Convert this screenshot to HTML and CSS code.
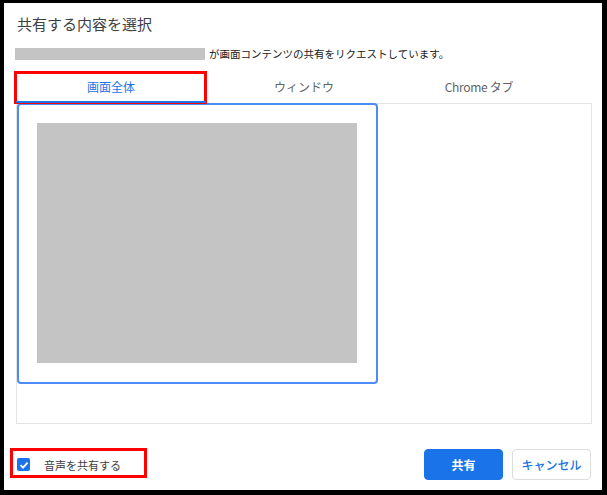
FILE: index.html
```html
<!DOCTYPE html>
<html lang="ja">
  <head>
    <meta charset="UTF-8" />
    <title>共有する内容を選択</title>
    <link rel="stylesheet" href="styles.css">
  </head>
  <body>
    <div class="dialog">
      <div class="dialog-title">共有する内容を選択</div>
      <div class="request-line">
        <span class="origin-mask"></span>
        <span class="request-text">が画面コンテンツの共有をリクエストしています。</span>
      </div>
      <div class="tabs">
        <div class="tab active">画面全体<span class="mark"></span></div>
        <div class="tab">ウィンドウ</div>
        <div class="tab">Chrome タブ</div>
      </div>
      <div class="source-panel">
        <div class="source-item selected">
          <div class="thumb"></div>
        </div>
      </div>
      <div class="dialog-footer">
        <label class="audio-option">
          <span class="checkbox">
            <svg width="12" height="12" viewBox="0 0 12 12">
              <path d="M2.5 6.2 L5 8.6 L9.6 3.6" fill="none" stroke="#fff" stroke-width="1.8" />
            </svg>
          </span>
          <span class="audio-label">音声を共有する</span>
          <span class="mark"></span>
        </label>
        <div class="buttons">
          <button class="btn primary">共有</button>
          <button class="btn">キャンセル</button>
        </div>
      </div>
    </div>
  </body>
</html>
```

FILE: styles.css
```css
* {
  box-sizing: border-box;
}
body {
  margin: 0;
  background: #000000;
  font-family: "Noto Sans CJK JP", "Noto Sans", sans-serif;
  color: #202124;
}
.dialog {
  margin: 3px 5px 0 4px;
  width: 598px;
  height: 487px;
  background: #ffffff;
  padding: 0 11px 0 12px;
}
.dialog-title {
  padding-top: 11px;
  padding-left: 1px;
  font-size: 15px;
  line-height: 20px;
  color: #3c4043;
}
.request-line {
  margin-top: 14px;
  display: flex;
  align-items: center;
  height: 12px;
}
.origin-mask {
  width: 190px;
  height: 12px;
  margin-left: -1px;
  background: #c4c4c4;
}
.request-text {
  margin-left: 4px;
  font-size: 10.5px;
  line-height: 12px;
  color: #202124;
}
.tabs {
  margin-top: 11px;
  display: grid;
  grid-template-columns: 190px 196px 154px;
  height: 32px;
}
.tab {
  position: relative;
  font-size: 12px;
  line-height: 32px;
  text-align: center;
  color: #5f6368;
}
.tab:last-child {
  letter-spacing: -0.3px;
}
.tab.active {
  color: #1a73e8;
}
.tab.active::after {
  content: "";
  position: absolute;
  left: 0;
  right: 0;
  bottom: 0;
  height: 2px;
  background: #1a73e8;
}
.tab .mark {
  position: absolute;
  left: -2px;
  right: -1px;
  top: 0;
  bottom: -1px;
  border: 3px solid #ff0000;
}
.source-panel {
  width: 576px;
  height: 321px;
  border: 1px solid #e3e4e6;
}
.source-item {
  width: 361px;
  height: 281px;
  border: 2px solid #4d8cf5;
  border-radius: 4px;
  padding: 18px 0 0 18px;
  margin: -1px 0 0 0;
}
.thumb {
  width: 320px;
  height: 240px;
  background: #c4c4c4;
}
.dialog-footer {
  margin-top: 25px;
  display: flex;
  justify-content: space-between;
  align-items: center;
  height: 31px;
}
.audio-option {
  position: relative;
  display: flex;
  align-items: center;
  padding-left: 1px;
}
.audio-option .mark {
  position: absolute;
  left: -6px;
  top: -9px;
  width: 137px;
  height: 30px;
  border: 3px solid #ff0000;
}
.checkbox {
  width: 13px;
  height: 13px;
  border-radius: 2px;
  background: #1a73e8;
  display: flex;
  align-items: center;
  justify-content: center;
}
.audio-label {
  margin-left: 14px;
  font-size: 11px;
  color: #3c4043;
}
.buttons {
  display: flex;
  gap: 9px;
}
.btn {
  width: 79px;
  height: 31px;
  border: 1px solid #dadce0;
  border-radius: 4px;
  background: #ffffff;
  color: #1a73e8;
  font-family: inherit;
  font-size: 12px;
  font-weight: 500;
}
.btn.primary {
  background: #1a73e8;
  border-color: #1a73e8;
  color: #ffffff;
  font-weight: 700;
}
```
